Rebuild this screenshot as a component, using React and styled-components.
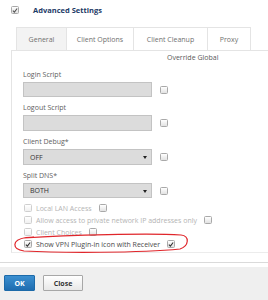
import React from "react";
import styled, { createGlobalStyle } from "styled-components";

const Global = createGlobalStyle`
  body {
    margin: 0;
    background: #fff;
    font-family: "Open Sans", "Liberation Sans", sans-serif;
  }
`;

const Page = styled.div`
  position: relative;
  width: 268px;
  height: 300px;
  overflow: hidden;
  background: #fff;
`;

const Header = styled.div`
  display: flex;
  align-items: center;
  gap: 14px;
  height: 20px;
  padding-left: 11px;
`;

const Title = styled.span`
  font-size: 7.5px;
  font-weight: 700;
  color: #1d3a66;
`;

const TabRow = styled.div`
  display: flex;
  margin-top: 7px;
  padding-left: 16px;
`;

const Tab = styled.div`
  width: ${(p) => p.w}px;
  height: 23px;
  box-sizing: border-box;
  display: flex;
  align-items: center;
  justify-content: center;
  font-size: 7px;
  color: #707070;
  background: ${(p) => (p.active ? "#f3f3f3" : "#fff")};
  border: 1px solid #e4e4e4;
  border-bottom: none;
  border-left: ${(p) => (p.first ? "1px solid #e4e4e4" : "none")};
`;

const Panel = styled.div`
  margin-left: 11px;
  border-top: 1px solid #e4e4e4;
  border-left: 1px solid #e4e4e4;
  border-bottom: 1px solid #ececec;
  padding: 2px 0 2px 11px;
`;

const OverrideHead = styled.div`
  height: 10px;
  line-height: 10px;
  padding-left: 144px;
  font-size: 7px;
  color: #5a5a5a;
  margin-bottom: 7px;
`;

const Field = styled.div`
  margin-bottom: ${(p) => (p.last ? 0 : 6)}px;
`;

const Label = styled.div`
  height: 10px;
  line-height: 10px;
  font-size: 7px;
  color: #5e5e5e;
  margin-bottom: 2px;
`;

const InputRow = styled.div`
  display: flex;
  align-items: center;
  gap: 8px;
`;

const Box = styled.div`
  position: relative;
  width: 129px;
  height: ${(p) => p.h || 15}px;
  box-sizing: border-box;
  background: #dcdcdc;
  border: 1px solid #c3c3c3;
  display: flex;
  align-items: center;
  padding-left: 6px;
  font-size: 7px;
  color: #333;
`;

const Arrow = styled.span`
  position: absolute;
  right: 4px;
  top: 50%;
  margin-top: -1px;
  width: 0;
  height: 0;
  border-left: 2px solid transparent;
  border-right: 2px solid transparent;
  border-top: 3px solid #222;
`;

const CheckBox = styled.span`
  display: inline-flex;
  align-items: center;
  justify-content: center;
  flex: none;
  width: 8px;
  height: 8px;
  box-sizing: border-box;
  border: 1px solid ${(p) => (p.dim ? "#cfcfcf" : "#a9a9a9")};
  border-radius: 1.5px;
  background: linear-gradient(#ffffff, ${(p) => (p.dim ? "#f0f0f0" : "#e2e2e2")});
`;

const Rows = styled.div`
  margin-top: 4px;
`;

const OptRow = styled.div`
  display: flex;
  align-items: center;
  height: 12px;
  padding-left: 1px;
  gap: 4px;
  font-size: 7px;
  color: ${(p) => (p.dim ? "#b4b4b4" : "#4a4a4a")};
`;

const After = styled.span`
  margin-left: 3px;
  display: inline-flex;
`;

const Separator = styled.div`
  margin-top: 9px;
  height: 1px;
  background: #dadada;
`;

const Footer = styled.div`
  margin-top: 4px;
  height: 33px;
  background: #efefef;
  display: flex;
  align-items: flex-start;
  gap: 8px;
  padding: 8px 0 0 4px;
  box-sizing: border-box;
`;

const Button = styled.button`
  height: 16px;
  width: ${(p) => p.w}px;
  padding: 0;
  font-family: inherit;
  font-size: 7px;
  font-weight: 700;
  border-radius: 1px;
  color: ${(p) => (p.primary ? "#fff" : "#333")};
  background: ${(p) =>
    p.primary ? "linear-gradient(#3b8fd0, #1f6db0)" : "linear-gradient(#ffffff, #e8e8e8)"};
  border: 1px solid ${(p) => (p.primary ? "#1c6aa9" : "#a7a7a7")};
`;

const Scribble = styled.svg`
  position: absolute;
  left: 0;
  top: 0;
  pointer-events: none;
`;

function Check({ dim, checked, tone = "#333" }) {
  return (
    <CheckBox dim={dim}>
      {checked && (
        <svg width="7" height="7" viewBox="0 0 7 7">
          <path d="M1 3.6 L2.8 5.4 L6 1.2" fill="none" stroke={tone} strokeWidth="1.3" />
        </svg>
      )}
    </CheckBox>
  );
}

const tabs = [
  { label: "General", w: 51, active: true },
  { label: "Client Options", w: 67 },
  { label: "Client Cleanup", w: 74 },
  { label: "Proxy", w: 43 },
];

const options = [
  { label: "Local LAN Access", dim: true },
  { label: "Allow access to private network IP addresses only", dim: true },
  { label: "Client Choices", dim: true },
  { label: "Show VPN Plugin-in icon with Receiver", checked: true },
];

export default function App() {
  return (
    <Page>
      <Global />
      <Header>
        <Check checked tone="#555" />
        <Title>Advanced Settings</Title>
      </Header>
      <TabRow>
        {tabs.map((t, i) => (
          <Tab key={t.label} w={t.w} active={t.active} first={i === 0}>
            {t.label}
          </Tab>
        ))}
      </TabRow>
      <Panel>
        <OverrideHead>Override Global</OverrideHead>
        <Field>
          <Label>Login Script</Label>
          <InputRow>
            <Box />
            <Check />
          </InputRow>
        </Field>
        <Field>
          <Label>Logout Script</Label>
          <InputRow>
            <Box h={16} />
            <Check />
          </InputRow>
        </Field>
        <Field>
          <Label>Client Debug*</Label>
          <InputRow>
            <Box h={16}>
              OFF
              <Arrow />
            </Box>
            <Check />
          </InputRow>
        </Field>
        <Field last>
          <Label>Split DNS*</Label>
          <InputRow>
            <Box>
              BOTH
              <Arrow />
            </Box>
            <Check />
          </InputRow>
        </Field>
        <Rows>
          {options.map((o) => (
            <OptRow key={o.label} dim={o.dim}>
              <Check dim={o.dim} checked={o.checked} />
              {o.label}
              <After>
                <Check checked={o.checked} />
              </After>
            </OptRow>
          ))}
        </Rows>
      </Panel>
      <Separator />
      <Footer>
        <Button primary w={31}>OK</Button>
        <Button w={40}>Close</Button>
      </Footer>
      <Scribble width="268" height="300">
        <path
          d="M24 238 C70 235 150 233 181 235 C190 236 189 246 180 249 C140 253 60 253 24 251 C12 249 11 240 26 237.5 L34 237"
          fill="none"
          stroke="#e0262b"
          strokeWidth="1.2"
        />
      </Scribble>
    </Page>
  );
}
